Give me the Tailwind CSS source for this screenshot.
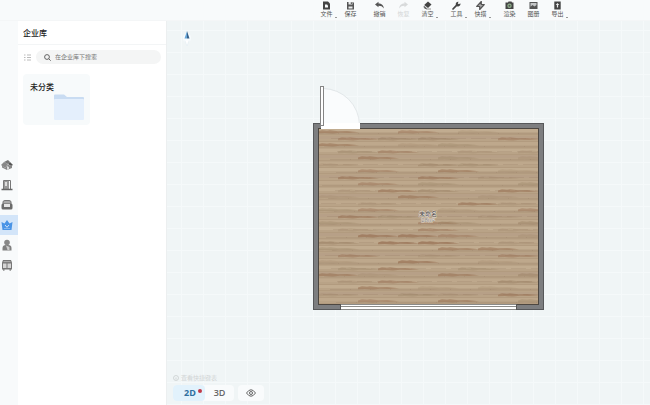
<!DOCTYPE html>
<html lang="zh-CN">
<head>
  <meta charset="UTF-8" />
  <meta name="viewport" content="width=device-width, initial-scale=1.0" />
  <title>企业库</title>
  <script src="https://cdn.jsdelivr.net/npm/@tailwindcss/browser@4"></script>
</head>
<body class="min-h-screen flex flex-col overflow-hidden bg-[#f7f9fa] text-[#333] font-['Liberation_Sans','Noto_Sans_CJK_SC',sans-serif]">

  <!-- Toolbar -->
  <header class="h-[21px] shrink-0 flex justify-center gap-[5px] pl-[234px] bg-[#f8fafb] border-b border-[#f4f6f7] text-[6px] leading-[8px] text-[#555]">
    <div class="flex">
      <button class="w-6 flex flex-col items-center pt-px relative">
        <svg class="w-[9px] h-[9px]" viewBox="0 0 9 9"><path d="M1 .5h5l2 2v6H1z" fill="#444"/><path d="M3 3.500h2l1 1v2H3z" fill="#f8fafb"/></svg>
        <span>文件</span><i class="absolute right-[2px] top-[17px] w-[2px] h-px bg-[#999]"></i>
      </button>
      <button class="w-6 flex flex-col items-center pt-px">
        <svg class="w-[9px] h-[9px]" viewBox="0 0 9 9"><path d="M1 1h6l1 1v6.500H1z" fill="#555"/><path d="M2.500 1h4v2.500h-4zM2.500 5.500h4v2h-4z" fill="#e9ebec"/><path d="M4.800 1.300h1v1.600h-1z" fill="#444"/></svg>
        <span>保存</span>
      </button>
    </div>
    <div class="flex">
      <button class="w-6 flex flex-col items-center pt-px">
        <svg class="w-[9px] h-[9px]" viewBox="0 0 9 9"><path d="M0 3.500 3.500.8v1.700C6.500 2.500 8.600 4 8.800 7.500 7.500 5.300 6 4.700 3.500 4.700v1.600z" fill="#555"/></svg>
        <span>撤销</span>
      </button>
      <button class="w-6 flex flex-col items-center pt-px text-[#d3d5d6]" disabled>
        <svg class="w-[9px] h-[9px]" viewBox="0 0 9 9"><path d="M9 3.500 5.500.8v1.700C2.500 2.500.4 4 .2 7.500 1.500 5.300 3 4.700 5.500 4.700v1.600z" fill="#d8dadb"/></svg>
        <span>恢复</span>
      </button>
      <button class="w-6 flex flex-col items-center pt-px relative">
        <svg class="w-[9px] h-[9px]" viewBox="0 0 9 9"><path d="M5 .5 8.500 3.500 5 7 1.200 4z" fill="#444"/><path d="M1 4.800 4 7.300 3.500 8 2 8 .5 6z" fill="#666"/><path d="M3 8h5" stroke="#777" stroke-width=".8"/></svg>
        <span>清空</span><i class="absolute right-[2px] top-[17px] w-[2px] h-px bg-[#999]"></i>
      </button>
    </div>
    <div class="flex">
      <button class="w-6 flex flex-col items-center pt-px relative">
        <svg class="w-[9px] h-[9px]" viewBox="0 0 9 9"><path d="M1 8 4.500 4.300" stroke="#444" stroke-width="1.700" stroke-linecap="round"/><path d="M6.500.7 5.800 2.500 7 3.200 8.300 2.200a2.400 2.400 0 0 1-3.300 3A2.400 2.400 0 0 1 6.500.7z" fill="#444"/></svg>
        <span>工具</span><i class="absolute right-[2px] top-[17px] w-[2px] h-px bg-[#999]"></i>
      </button>
      <button class="w-6 flex flex-col items-center pt-px relative">
        <svg class="w-[9px] h-[9px]" viewBox="0 0 9 9" fill="none" stroke="#555" stroke-width="1.200"><path d="M5.300.5V3.500H8.300L3.700 8.500V5.500H.7z" fill="#aaa" stroke-linejoin="round"/></svg>
        <span>快搭</span><i class="absolute right-[2px] top-[17px] w-[2px] h-px bg-[#999]"></i>
      </button>
    </div>
    <div class="flex">
      <button class="w-6 flex flex-col items-center pt-px">
        <svg class="w-[9px] h-[9px]" viewBox="0 0 9 9"><path d="M1 1.500h2l.5-1h3l.5 1h1.500v6.500h-8V1.500z" fill="#444"/><circle cx="4.500" cy="4.700" r="2.200" fill="#8fb08a"/><circle cx="4.500" cy="4.700" r="1" fill="#555"/></svg>
        <span>渲染</span>
      </button>
      <button class="w-6 flex flex-col items-center pt-px">
        <svg class="w-[9px] h-[9px]" viewBox="0 0 9 9"><path d="M.5 1h8v7h-8z" fill="#555"/><path d="M1.500 2h6v2L5.500 5.500 3.500 4 1.500 5.800z" fill="#c4c6c7"/></svg>
        <span>图册</span>
      </button>
      <button class="w-6 flex flex-col items-center pt-px relative">
        <svg class="w-[9px] h-[9px]" viewBox="0 0 9 9"><path d="M1.300.5h6.400v8H1.300z" fill="#444"/><path d="M4.500 2 6.300 4H5.100v2.500H3.900V4H2.700z" fill="#eee"/></svg>
        <span>导出</span><i class="absolute right-[2px] top-[17px] w-[2px] h-px bg-[#999]"></i>
      </button>
    </div>
  </header>

  <div class="flex-1 flex">
    <!-- Category rail -->
    <nav class="w-[18px] shrink-0 flex flex-col pt-[134px] bg-[#f8fafb]">
      <a href="#" aria-label="户型" class="h-5 flex items-center pl-px">
        <svg class="w-3 h-3" viewBox="0 0 12 12"><path d="M0 6 3 3 7 5 4 9z" fill="#888"/><path d="M3 3 7 1 9 3 7 5z" fill="#777"/><path d="M7 5 9 3 12 6 10 7z" fill="#555"/><path d="M1 6.500 4 9 7 5.500 10 7 11 6.500V9L6 11 1 8.500z" fill="#888"/><path d="M6 7 8 8V10L6 11z" fill="#ddd"/></svg>
      </a>
      <a href="#" aria-label="门窗" class="h-5 flex items-center pl-px">
        <svg class="w-3 h-3" viewBox="0 0 12 12"><path d="M2.500 10V1.500h7V10" fill="none" stroke="#777"/><path d="M3 2h5v8.500H3z" fill="#999"/><path d="M4 3h2v4H4z" fill="#ddd"/><path d="M.5 10.500h11" stroke="#666" stroke-width="1.500"/></svg>
      </a>
      <a href="#" aria-label="家具" class="h-5 flex items-center pl-px">
        <svg class="w-3 h-3" viewBox="0 0 12 12"><path d="M2 5V3Q2 1.500 4 1.500H8Q10 1.500 10 3V5" fill="#aaa" stroke="#777"/><rect x=".5" y="4.500" width="11" height="6" rx="1.500" fill="#6b6b6b"/><path d="M3 5h6v3H3z" fill="#e6e6e6"/></svg>
      </a>
      <a href="#" aria-label="企业库" class="h-5 flex items-center pl-px bg-[#d3e5f9]">
        <svg class="w-3 h-3" viewBox="0 0 12 12"><path d="M.5 3 3.500 4.500 6 1 8.500 4.500 11.500 3 10.500 11h-9z" fill="#4a94e6"/><path d="M4 6 6 8.300 8 6" fill="none" stroke="#d3e5f9"/><path d="M3 9.500h6" stroke="#a7cbf3" stroke-width=".6"/></svg>
      </a>
      <a href="#" aria-label="我的" class="h-5 flex items-center pl-px">
        <svg class="w-3 h-3" viewBox="0 0 12 12"><circle cx="6" cy="3.500" r="2.800" fill="#888"/><path d="M1.500 11.500V9Q1.500 6 5 6H7Q10.500 6 10.500 9v2.500z" fill="#808080"/><path d="M5 6.500 8.500 8v3H6.500z" fill="#ccc"/></svg>
      </a>
      <a href="#" aria-label="定制" class="h-5 flex items-center pl-px">
        <svg class="w-3 h-3" viewBox="0 0 12 12"><path d="M2 1h8l1 2.500v7H1v-7z" fill="#777"/><path d="M2.500 2h7v1.200h-7z" fill="#aaa"/><path d="M2 4.500h3.500V9H2zM6.500 4.500H10V9H6.500z" fill="#d5d5d5"/><path d="M2 11h1.500M8.500 11H10" stroke="#555"/></svg>
      </a>
    </nav>

    <!-- Library panel -->
    <aside class="w-[149px] shrink-0 bg-white border-r border-[#eceff0]">
      <h1 class="h-6 flex items-center px-[5px] pt-[2px] border-b border-[#f3f5f6] text-[8px] font-medium text-[#222]">企业库</h1>
      <div class="flex items-center gap-[5px] pt-[5px] pl-[6px] pr-[5px]">
        <button aria-label="列表">
          <svg class="w-[7px] h-[7px] block" viewBox="0 0 7 7"><path d="M0 1h1.500M0 3.500h1.500M0 6h1.500M3 1h4M3 3.500h4M3 6h4" stroke="#aaa" stroke-width=".8"/></svg>
        </button>
        <label class="flex-1 h-[14px] flex items-center gap-1 pl-2 rounded-full bg-[#f4f5f5]">
          <svg class="w-[7px] h-[7px] shrink-0" viewBox="0 0 7 7" fill="none" stroke="#555" stroke-width=".9"><circle cx="3" cy="3" r="2.400"/><path d="M4.800 4.800 6.700 6.700"/></svg>
          <input type="text" aria-label="搜索" placeholder="在企业库下搜索" class="w-full h-[10px] min-w-0 text-[6px] outline-none placeholder:text-[#777]" />
        </label>
      </div>
      <a href="#" class="block w-[67px] h-[51px] mt-[10px] ml-[5px] pt-2 px-[7px] rounded bg-[#f7fafb] text-[8px] leading-[12px] font-medium text-[#222]">
        未分类
        <svg class="w-[30px] h-[26px] ml-6" viewBox="0 0 30 26"><path d="M0 1.500Q0 .5 1 .5H10L13 3H29Q30 3 30 4V8H0z" fill="#c9dcf2"/><rect y="5" width="30" height="21" rx="1" fill="#e4effc"/></svg>
      </a>
    </aside>

    <!-- Drawing area -->
    <main class="flex-1 relative bg-[#f0f5f6]">
      <svg class="absolute inset-0 w-full h-full" aria-hidden="true">
        <defs>
          <pattern id="grid" width="22" height="22" patternUnits="userSpaceOnUse" x="14" y="9">
            <path d="M.5 0V22M0 .5H22" stroke="#f5f9fa" />
          </pattern>
        </defs>
        <rect width="100%" height="100%" fill="url(#grid)" />
      </svg>

      <svg class="absolute left-[15px] top-[9px] w-[10px] h-[18px]" viewBox="0 0 10 18"><circle cx="5" cy="8" r="4" fill="#f7fbfd"/><path d="M5 1 7.500 8.500H5z" fill="#36618a"/><path d="M5 1 2.500 8.500H5z" fill="#6aa7d8"/><path d="M3 10.500 5 16 7 10.500" fill="#fff" stroke="#e2edf3" stroke-width=".6"/></svg>

      <!-- Floor plan -->
      <svg class="absolute left-[146px] top-[65px] w-[231px] h-[224px]" viewBox="0 0 231 224">
        <defs>
          <path id="streak" d="M0 -.6 4 -1.800 9 -1.200 12 -1.800 20 -.8 29 -1 41 .2 31 1 22 .7 15 1.600 7 1.100 0 1.300z" />
          <clipPath id="room"><rect x="6" y="43" width="219" height="175" /></clipPath>
        </defs>
        <path d="M0 37H231V224H0z" fill="#57585a" />
        <path d="M1 38H230V223H1z" fill="#7d7e80" />
        <path d="M5 42H226V219H5z" fill="#4d4741" />
        <rect x="6" y="43" width="219" height="175" fill="#b9a387" />
        <g id="floor" clip-path="url(#room)"></g>
        <path d="M28 218H203V224H28z" fill="#8b8b89" />
        <path d="M28 219H203V220H28zM28 221H203V223H28z" fill="#fff" />
        <path d="M27.500 218V224M203.500 218V224" stroke="#555" />
        <path d="M10 43V3A37 37 0 0 1 47 40V43z" fill="#fafcfd" />
        <path d="M10 2.500A37 37 0 0 1 46.500 39" fill="none" stroke="#dde2e4" stroke-width=".8" />
        <path d="M8 37H47V43H8z" fill="#fff" />
        <rect x="7.500" y=".5" width="3" height="39" fill="#fff" stroke="#858585" />
        <g text-anchor="middle" fill="#4f4a4a" stroke="#e8e0d8" stroke-width=".8" paint-order="stroke" font-size="6">
          <text x="115" y="130">未命名</text>
          <text x="115" y="136" fill="#8f877f">28m²</text>
        </g>
      </svg>

      <!-- View switch -->
      <div class="absolute left-[6px] bottom-1 flex flex-col gap-[3px]">
        <p class="flex items-center gap-[2px] text-[6px] leading-[8px] text-[#d0d4d5]">
          <svg class="w-[6px] h-[6px]" viewBox="0 0 6 6" fill="none" stroke="#c4c8c9" stroke-width=".7"><circle cx="3" cy="3" r="2.500"/><path d="M3 2.500V4.500"/></svg>
          查看快捷键表
        </p>
        <div class="flex gap-1 text-[9px] font-['Open_Sans',sans-serif]">
          <div class="flex rounded-sm bg-[#f9fbfc]">
            <button class="relative w-8 h-4 pl-[2px] rounded-sm bg-[#e2f2fc] font-bold text-[#2f6f9f]">2D<i class="absolute right-[3px] top-1 size-1 rounded-full bg-[#c03a48]"></i></button>
            <button class="w-[29px] h-4 font-semibold text-[#666]">3D</button>
          </div>
          <button aria-label="显示" class="w-[26px] h-4 flex items-center justify-center rounded-sm bg-[#f9fbfc]">
            <svg class="w-[10px] h-[8px]" viewBox="0 0 10 8" fill="none" stroke="#555" stroke-width=".9"><path d="M.5 4Q5-2.500 9.500 4 5 10.500.5 4z"/><circle cx="5" cy="4" r="1.500"/></svg>
          </button>
        </div>
      </div>
    </main>
  </div>

  <script>
    // Board grain, one list of dark streaks per row: [x, strength]
    const rows = [
      [[5, 6], [85, 5], [145, 2]],
      [[25, 5], [65, 4], [105, 4], [185, 5]],
      [[5, 6], [85, 2], [125, 3]],
      [[25, 3], [65, 5], [145, 2], [205, 2]],
      [[45, 6], [125, 3], [205, 2]],
      [[5, 2], [105, 4], [145, 3]],
      [[45, 5], [125, 6], [185, 2]],
      [[25, 6], [105, 6], [165, 2]],
      [[45, 5], [105, 3], [205, 3]],
      [[25, 2], [65, 6], [105, 4], [185, 6]],
      [[5, 2], [85, 6], [165, 2]],
      [[45, 2], [145, 6], [185, 2]],
      [[5, 3], [45, 5], [125, 2], [205, 5]],
      [[25, 6], [65, 3], [165, 2]],
      [[5, 3], [105, 5], [125, 3], [205, 4]],
      [[25, 2], [105, 5], [185, 2]],
      [[45, 7], [85, 7], [125, 5], [205, 2]],
      [[5, 4], [65, 7], [105, 7], [185, 2]],
      [[5, 3], [125, 6], [165, 6]],
      [[25, 5], [105, 2], [185, 5]],
      [[5, 2], [85, 7], [165, 2]],
      [[25, 3], [65, 6], [145, 3]],
      [[5, 6], [45, 2], [125, 6], [205, 4]],
      [[25, 2], [65, 5], [185, 4]],
      [[45, 6], [105, 2], [165, 2]],
      [[5, 2], [85, 3], [125, 2], [185, 6]],
      [[45, 5], [125, 6], [205, 3]]
    ];
    const tones = ['#c1ac90', '#b7a087', '#bea88c'];
    let out = '';
    rows.forEach((row, r) => {
      const y = 46 + Math.round(r * 6.5);
      out += `<rect x="5" y="${y - 3}" width="220" height="3" fill="${tones[r % 3]}"/>`;
      out += `<rect x="5" y="${y + 2}" width="220" height="1" fill="#967c61" opacity=".2"/>`;
      for (let x = 5 + (r * 13) % 20; x < 225; x += 20) {
        const h = (x * 7 + r * 11) % 4;
        out += `<rect x="${x}" y="${y - 2 + h}" width="${12 + h * 3}" height="1" fill="#8d7056" opacity=".18"/>`;
      }
      row.forEach(([x, s]) => {
        out += `<use href="#streak" x="${x}" y="${y}" fill="${s > 4 ? '#94694c' : '#8c7355'}" opacity="${s / 12}"/>`;
      });
    });
    document.getElementById('floor').innerHTML = out;
  </script>
</body>
</html>
